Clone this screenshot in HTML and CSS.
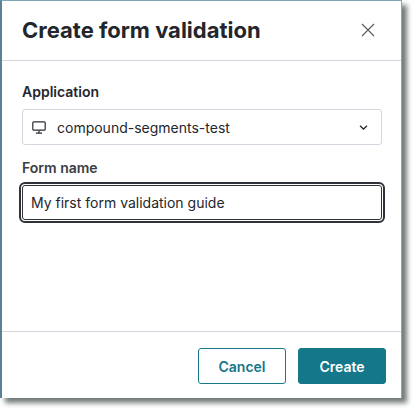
FILE: index.html
```html
<!DOCTYPE html>
<html lang="en">
<head>
<meta charset="utf-8">
<title>Create form validation</title>
<link rel="stylesheet" href="styles.css">
</head>
<body>
<div class="dialog">
  <header class="head">
    <h1 class="title">Create form validation</h1>
    <button class="close" aria-label="Close">
      <svg width="14" height="14" viewBox="0 0 14 14" fill="none" stroke="#5c5f66" stroke-width="1.2"><path d="M1 1 13 13M13 1 1 13"/></svg>
    </button>
  </header>
  <main class="body">
    <div class="label">Application</div>
    <div class="select">
      <svg class="monitor" width="14" height="13" viewBox="0 0 14 13" fill="none" stroke="#2a2d33" stroke-width="1.2"><rect x="0.8" y="0.8" width="12.4" height="8.4" rx="1"/><path d="M7 9.4v2.6M4 12.2h6"/></svg>
      <span class="value">compound-segments-test</span>
      <svg class="chev" width="9" height="5" viewBox="0 0 9 5" fill="none" stroke="#23262c" stroke-width="1.3"><path d="M1 .8 4.5 4 8 .8"/></svg>
    </div>
    <div class="label second">Form name</div>
    <div class="input">My first form validation guide</div>
  </main>
  <footer class="foot">
    <button class="btn cancel">Cancel</button>
    <button class="btn create">Create</button>
  </footer>
</div>
</body>
</html>
```
FILE: styles.css
```css
html, body {
  margin: 0;
  height: 408px;
  background: #fff;
  overflow: hidden;
}
body {
  font-family: Inter, "Liberation Sans", sans-serif;
  color: #23262c;
}
.dialog {
  box-sizing: border-box;
  width: 402px;
  height: 398px;
  display: flex;
  flex-direction: column;
  background: #fff;
  border-top: 1px solid #7fa6b6;
  border-left: 2px solid #5d8194;
  border-right: 1px solid #8aa9b6;
  box-shadow: 5px 5px 5px rgba(40, 50, 50, 0.65);
}
.head {
  height: 60px;
  flex: none;
  box-sizing: border-box;
  padding: 0 26px 2px 20px;
  display: flex;
  align-items: center;
  justify-content: space-between;
  border-bottom: 1px solid #d6d6e0;
}
.title {
  margin: 0;
  font-size: 22px;
  font-weight: 700;
}
.close {
  padding: 0;
  border: 0;
  background: none;
  display: flex;
}
.body {
  flex: 1;
  padding: 22px 19px 0 20px;
}
.label {
  font-size: 14px;
  font-weight: 600;
  line-height: 18px;
  margin-bottom: 8px;
}
.label.second {
  margin-top: 14px;
  margin-bottom: 8px;
  color: #3a3d44;
}
.select {
  box-sizing: border-box;
  height: 36px;
  border: 1px solid #d6d6e0;
  border-radius: 3px;
  padding: 0 9px;
  display: flex;
  align-items: center;
  font-size: 14px;
}
.monitor { margin-right: 11px; }
.value { flex: 1; }
.chev { margin-right: 4px; }
.input {
  box-sizing: border-box;
  height: 35px;
  border: 1px solid #2f3238;
  outline: 2px solid #2f3238;
  outline-offset: 1px;
  border-radius: 3px;
  padding: 0 8px;
  display: flex;
  align-items: center;
  font-size: 14px;
}
.foot {
  height: 67px;
  flex: none;
  box-sizing: border-box;
  border-top: 1px solid #d6d6e0;
  padding: 16px 15px 0 0;
  display: flex;
  justify-content: flex-end;
  gap: 12px;
  align-items: flex-start;
}
.btn {
  box-sizing: border-box;
  width: 88px;
  height: 36px;
  border-radius: 3px;
  font-family: inherit;
  font-size: 14px;
  font-weight: 600;
  padding: 0;
  border: 1px solid #14778a;
}
.cancel { background: #fff; color: #14778a; }
.create { background: #14778a; color: #fff; }
```
